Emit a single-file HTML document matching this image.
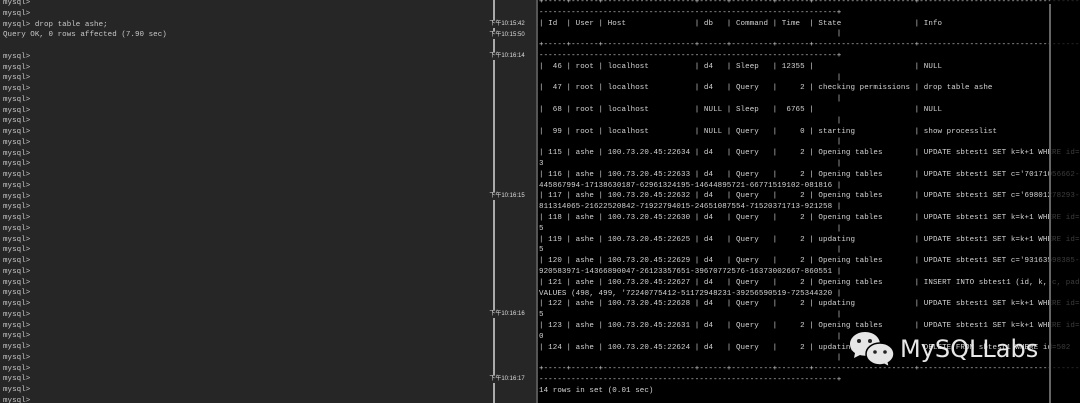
<!DOCTYPE html>
<html><head><meta charset="utf-8"><style>
html,body{margin:0;padding:0;width:1080px;height:403px;overflow:hidden;background:#000}
#L{position:absolute;left:0;top:0;width:536px;height:403px;background:#262626;overflow:hidden}
#R{position:absolute;left:538px;top:0;width:542px;height:403px;background:#000;overflow:hidden}
pre{margin:0;font-family:"Liberation Mono",monospace;font-size:7.5px;line-height:10.75px;white-space:pre}
#lt{position:absolute;left:3px;top:-2px;color:#c8c8c8;letter-spacing:0.05px}
#rt{position:absolute;left:1px;top:-3px;color:#d4d4d4;line-height:10.8px;letter-spacing:0.08px}
.ts{position:absolute;left:486px;width:42px;font-family:"Liberation Sans","Noto Sans CJK SC",sans-serif;font-size:6px;color:#ddd;background:#262626;text-align:center;line-height:8px}
</style></head><body>
<div id="L">
<div style="position:absolute;left:493px;top:0;width:2px;height:403px;background:#aaa"></div>
<div class="ts" style="top:20px">下午10:15:42</div>
<div class="ts" style="top:31px">下午10:15:50</div>
<div class="ts" style="top:52px">下午10:16:14</div>
<div class="ts" style="top:192px">下午10:16:15</div>
<div class="ts" style="top:310px">下午10:16:16</div>
<div class="ts" style="top:375px">下午10:16:17</div>
<pre id="lt">mysql&gt;
mysql&gt;
mysql&gt; drop table ashe;
Query OK, 0 rows affected (7.90 sec)

mysql&gt;
mysql&gt;
mysql&gt;
mysql&gt;
mysql&gt;
mysql&gt;
mysql&gt;
mysql&gt;
mysql&gt;
mysql&gt;
mysql&gt;
mysql&gt;
mysql&gt;
mysql&gt;
mysql&gt;
mysql&gt;
mysql&gt;
mysql&gt;
mysql&gt;
mysql&gt;
mysql&gt;
mysql&gt;
mysql&gt;
mysql&gt;
mysql&gt;
mysql&gt;
mysql&gt;
mysql&gt;
mysql&gt;
mysql&gt;
mysql&gt;
mysql&gt;
mysql&gt;</pre>
</div>
<div style="position:absolute;left:536px;top:0;width:2px;height:403px;background:#555"></div>
<div id="R">
<pre id="rt">+-----+------+--------------------+------+---------+-------+----------------------+--------------------------------------------------------
-----------------------------------------------------------------+
| Id  | User | Host               | db   | Command | Time  | State                | Info
                                                                 |
+-----+------+--------------------+------+---------+-------+----------------------+--------------------------------------------------------
-----------------------------------------------------------------+
|  46 | root | localhost          | d4   | Sleep   | 12355 |                      | NULL
                                                                 |
|  47 | root | localhost          | d4   | Query   |     2 | checking permissions | drop table ashe
                                                                 |
|  68 | root | localhost          | NULL | Sleep   |  6765 |                      | NULL
                                                                 |
|  99 | root | localhost          | NULL | Query   |     0 | starting             | show processlist
                                                                 |
| 115 | ashe | 100.73.20.45:22634 | d4   | Query   |     2 | Opening tables       | UPDATE sbtest1 SET k=k+1 WHERE id=5
3                                                                |
| 116 | ashe | 100.73.20.45:22633 | d4   | Query   |     2 | Opening tables       | UPDATE sbtest1 SET c='70171056662-7
445867994-17138630187-62961324195-14644895721-66771519102-081816 |
| 117 | ashe | 100.73.20.45:22632 | d4   | Query   |     2 | Opening tables       | UPDATE sbtest1 SET c='69801278293-5
811314065-21622520842-71922794015-24651087554-71520371713-921258 |
| 118 | ashe | 100.73.20.45:22630 | d4   | Query   |     2 | Opening tables       | UPDATE sbtest1 SET k=k+1 WHERE id=5
5                                                                |
| 119 | ashe | 100.73.20.45:22625 | d4   | Query   |     2 | updating             | UPDATE sbtest1 SET k=k+1 WHERE id=5
5                                                                |
| 120 | ashe | 100.73.20.45:22629 | d4   | Query   |     2 | Opening tables       | UPDATE sbtest1 SET c='93163598385-7
920583971-14366890047-26123357651-39670772576-16373002667-860551 |
| 121 | ashe | 100.73.20.45:22627 | d4   | Query   |     2 | Opening tables       | INSERT INTO sbtest1 (id, k, c, pad)
VALUES (498, 499, '72240775412-51172948231-39256590519-725344320 |
| 122 | ashe | 100.73.20.45:22628 | d4   | Query   |     2 | updating             | UPDATE sbtest1 SET k=k+1 WHERE id=5
5                                                                |
| 123 | ashe | 100.73.20.45:22631 | d4   | Query   |     2 | Opening tables       | UPDATE sbtest1 SET k=k+1 WHERE id=5
0                                                                |
| 124 | ashe | 100.73.20.45:22624 | d4   | Query   |     2 | updating             | DELETE FROM sbtest1 WHERE id=502
                                                                 |
+-----+------+--------------------+------+---------+-------+----------------------+--------------------------------------------------------
-----------------------------------------------------------------+
14 rows in set (0.01 sec)</pre>
<div style="position:absolute;left:512px;top:0;width:30px;height:403px;background:rgba(0,0,0,0.72)"></div>
<div style="position:absolute;left:511px;top:4px;width:2px;height:399px;background:#666"></div>
</div>
<svg style="position:absolute;left:848px;top:330px" width="52" height="36" viewBox="0 0 52 36">
<path d="M17 2C8 2 2 8 2 14c0 4 2 7 5 9l-1 5 6-3c2 .5 3 .7 5 .7 9 0 15-5.5 15-11.7S26 2 17 2z" fill="#e6e6e6"/>
<circle cx="11" cy="11" r="2" fill="#222"/><circle cx="22" cy="11" r="2" fill="#222"/>
<path d="M32 13c-8 0-14 5-14 11s6 11 14 11c1.6 0 3-.2 4.4-.6l5 2.6-1-4.4c3.4-2 5.6-5 5.6-8.6 0-6-6-11-14-11z" fill="#e6e6e6" stroke="#000" stroke-width="1.5"/>
<circle cx="27" cy="22" r="1.8" fill="#222"/><circle cx="37" cy="22" r="1.8" fill="#222"/>
</svg>
<div style="position:absolute;left:900px;top:333px;font-family:'DejaVu Sans','Liberation Sans',sans-serif;font-size:24px;line-height:32px;color:#e8e8e8">MySQLLabs</div>
</body></html>
